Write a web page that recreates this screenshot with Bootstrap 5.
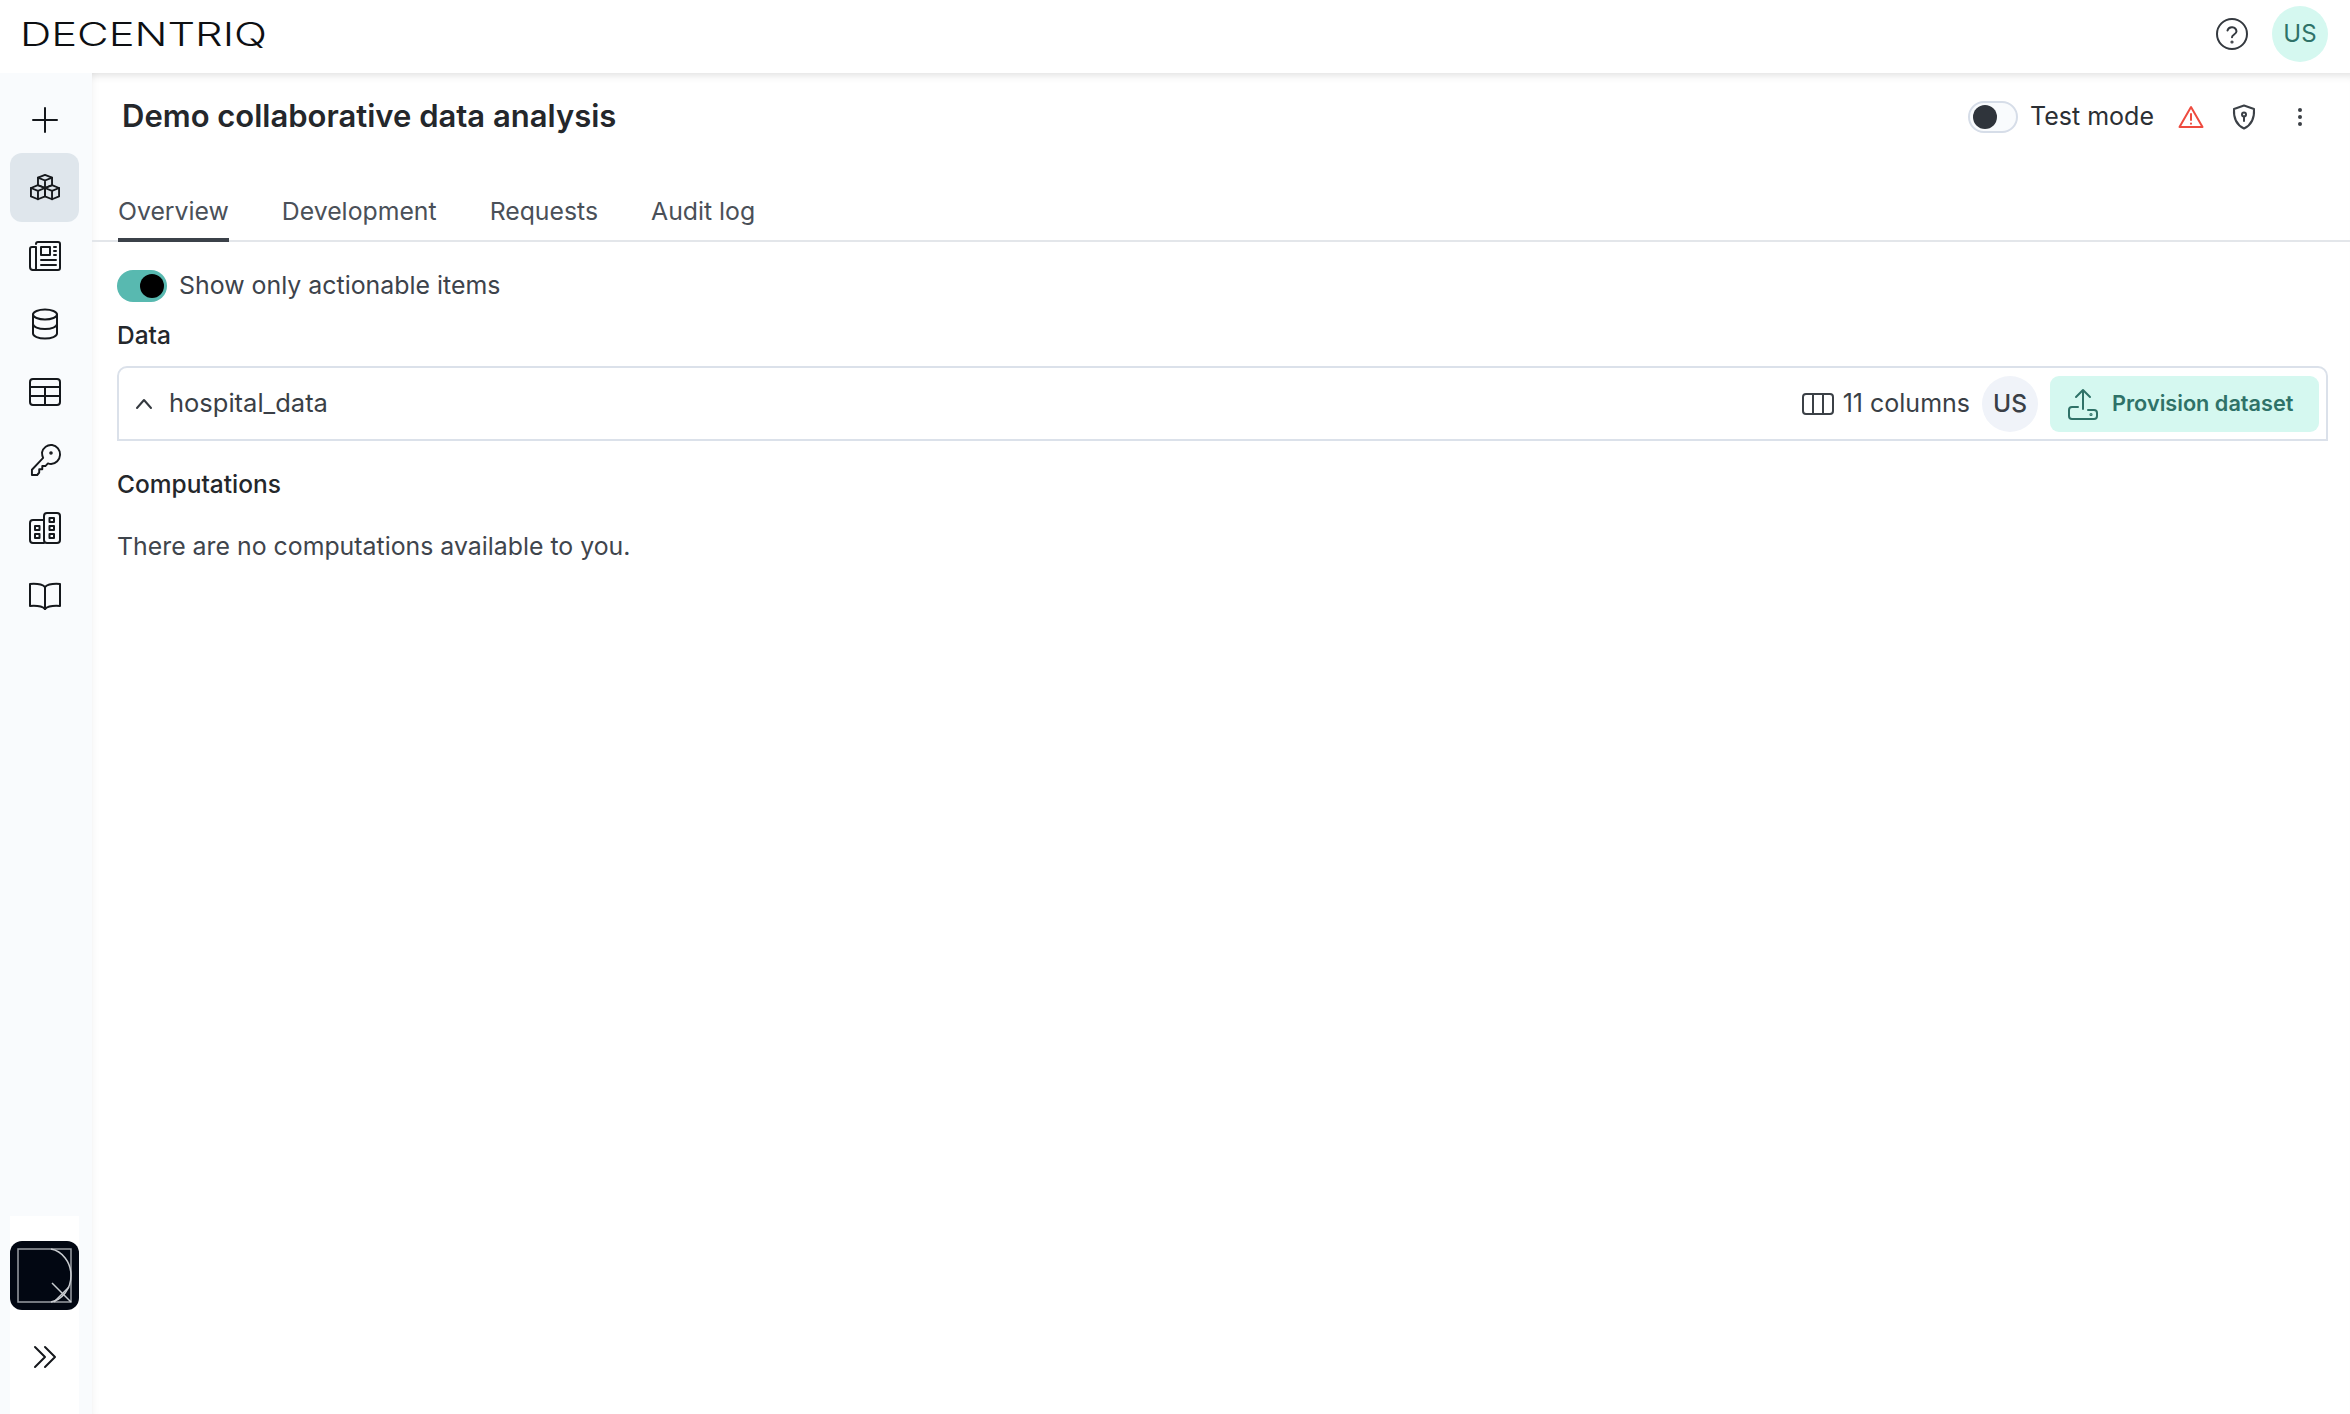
<!DOCTYPE html>
<html lang="en">
<head>
<meta charset="utf-8">
<title>Decentriq</title>
<link href="https://cdn.jsdelivr.net/npm/bootstrap@5.3.0/dist/css/bootstrap.min.css" rel="stylesheet">
<style>
html,body{height:100%;}
body{font-family:Inter,"Liberation Sans",sans-serif;font-size:24px;color:#3d434b;background:#fff;overflow:hidden;}
svg{display:block;flex:none;}
.ico{fill:none;stroke:#15181c;stroke-width:2;stroke-linecap:round;stroke-linejoin:round;}
.topbar{height:73px;padding:0 22px 5px 19px;background:#fff;position:relative;z-index:3;}
.brand-text{font-family:Inter,sans-serif;font-weight:300;font-size:32px;fill:#0d0f12;}
.avatar-top{width:56px;height:56px;border-radius:50%;background:#d5f8f0;color:#2f7268;font-size:24px;}
.shell{height:calc(100% - 73px);}
.rail{width:92px;background:#f9fbfd;padding-top:12px;position:relative;z-index:2;}
.rail-btn{width:69px;height:69px;margin:0 0 -1px 10px;border-radius:12px;}
.rail-btn.current{background:#dfe6ec;}
.rail-foot{width:69px;margin-left:10px;background:#fff;padding-top:25px;}
.logo-tile{width:69px;height:69px;border-radius:12px;background:#020712;}
.fold-btn{height:104px;width:69px;padding-bottom:10px;}
.stage{min-width:0;box-shadow:inset 0 9px 9px -7px rgba(0,0,0,.13),inset 9px 0 9px -8px rgba(0,0,0,.05);}
.title-row{height:87px;padding:0 34px 0 30px;}
.page-title{font-size:31px;font-weight:600;color:#24272b;margin:0 0 2px;line-height:1.2;}
.tabs-row{height:82px;border-bottom:2px solid #e3e6ea;padding-left:26px;gap:53px;}
.tab-link{color:#4a5058;font-size:24.8px;height:82px;padding-top:33px;text-decoration:none;line-height:36px;}
.tab-link.current{border-bottom:4px solid #3b4149;margin-bottom:-2px;height:82px;}
.switch-track{width:50px;height:32px;border-radius:16px;padding:0 3px;}
.switch-track i{display:block;width:24px;height:24px;border-radius:50%;}
.switch-on{background:#58b9b0;justify-content:flex-end;}
.switch-on i{background:#000;}
.switch-off{background:#f9fbfd;border:2px solid #d6dde8;}
.switch-off i{background:#2f343b;}
.test-label{color:#2b2f34;font-size:25px;margin-left:12px;}
.body-pad{padding:0 22px 0 25px;}
.filter-row{gap:12px;font-size:24.9px;padding-top:9px;height:79px;}
.sect-label{color:#24272b;font-size:24.5px;font-weight:500;line-height:30px;}
.data-box{height:75px;border:2px solid #dbe1ea;border-radius:10px 10px 0 0;padding:0 7px 0 15px;margin-top:16px;}
.data-name{font-size:25.5px;color:#3a3f46;margin-left:15px;}
.col-count{font-size:25px;color:#3a3f46;}
.avatar-small{width:56px;height:56px;border-radius:50%;background:#f0f3f9;color:#3a3f46;font-size:24.5px;font-weight:500;margin:0 12px;}
.provision{height:56px;width:269px;background:#d5f8f0;color:#2f7268;border:0;border-radius:9px;font-size:21.7px;font-weight:600;gap:14px;padding:0 0 0 18px;}
.provision:hover{background:#d5f8f0;color:#2f7268;}
.none-text{font-size:24.85px;color:#3f454c;margin-top:29px;}
</style>
</head>
<body>
<header class="topbar d-flex align-items-center justify-content-between">
  <svg width="254" height="40" viewBox="0 0 254 40"><text class="brand-text" x="1" y="31.500" textLength="247" lengthAdjust="spacingAndGlyphs">DECENTRIQ</text></svg>
  <div class="d-flex align-items-center gap-4">
    <svg width="34" height="34" viewBox="0 0 34 34" class="ico" style="stroke:#34393f;margin-right:-1px"><circle cx="17" cy="17" r="15"/><path d="M12.500 13.500a4.600 4.600 0 0 1 9 .8c0 3-4.500 3.400-4.500 6"/><circle cx="17" cy="25" r=".6"/></svg>
    <div class="avatar-top d-flex align-items-center justify-content-center">US</div>
  </div>
</header>
<div class="shell d-flex">
  <nav class="rail d-flex flex-column flex-shrink-0">
    <a class="rail-btn d-flex align-items-center justify-content-center"><svg width="32" height="32" viewBox="0 0 32 32" class="ico"><path d="M16 4v24M4 16h24"/></svg></a>
    <a class="rail-btn current d-flex align-items-center justify-content-center"><svg width="32" height="30" viewBox="0 0 34 32" class="ico"><path d="M17 2l7.500 3v8l-7.500 3-7.500-3V5z"/><path d="M9.500 5l7.500 3 7.500-3M17 8v8"/><path d="M9.500 13L17 16v9l-7.500 3L2 25v-9z"/><path d="M2 16l7.500 3 7.500-3M9.500 19v9"/><path d="M24.500 13l7.500 3v9l-7.500 3-7.500-3v-9z"/><path d="M17 16l7.500 3 7.500-3M24.500 19v9"/></svg></a>
    <a class="rail-btn d-flex align-items-center justify-content-center"><svg width="34" height="30" viewBox="0 0 34 30" class="ico"><path d="M8 3a2 2 0 0 1 2-2h20a2 2 0 0 1 2 2v24a2 2 0 0 1-2 2H5"/><path d="M5 29a3 3 0 0 1-3-3V8a2 2 0 0 1 2-2h4v21a2 2 0 0 1-3 2z"/><rect x="13" y="6" width="9" height="8"/><path d="M26 6h2M26 10h2M26 14h2M13 19h15M13 24h15"/></svg></a>
    <a class="rail-btn d-flex align-items-center justify-content-center"><svg width="28" height="32" viewBox="0 0 28 32" class="ico"><ellipse cx="14" cy="6.500" rx="12" ry="5"/><path d="M2 6.500v19c0 2.800 5.400 5 12 5s12-2.200 12-5v-19"/><path d="M2 16c0 2.800 5.400 5 12 5s12-2.200 12-5"/></svg></a>
    <a class="rail-btn d-flex align-items-center justify-content-center"><svg width="32" height="28" viewBox="0 0 32 28" class="ico"><rect x="1" y="1" width="30" height="26" rx="3"/><path d="M1 9h30M1 18h30M16 9v18"/></svg></a>
    <a class="rail-btn d-flex align-items-center justify-content-center"><svg width="32" height="34" viewBox="0 0 32 34" class="ico"><path d="M12.500 9.500A9.500 9.500 0 1 1 22 21c-1.300 0-2.300-.2-3.300-.6L16 23.100h-3.200v3.200H9.600v3.200L7.500 32H2v-5.200l11.700-11.900c-.8-1.600-1.200-3.400-1.200-5.400z" transform="translate(1 0) scale(.96 1)"/><circle cx="22" cy="10" r=".8"/></svg></a>
    <a class="rail-btn d-flex align-items-center justify-content-center"><svg width="32" height="32" viewBox="0 0 32 32" class="ico"><rect x="15" y="1" width="16" height="30" rx="3"/><path d="M15 31H4a3 3 0 0 1-3-3V11a3 3 0 0 1 3-3h11"/><rect x="20.500" y="6" width="4.500" height="4"/><rect x="20.500" y="14" width="4.500" height="4"/><rect x="20.500" y="22" width="4.500" height="4"/><rect x="6" y="14" width="4.500" height="4"/><rect x="6" y="22" width="4.500" height="4"/></svg></a>
    <a class="rail-btn d-flex align-items-center justify-content-center"><svg width="32" height="28" viewBox="0 0 32 28" class="ico"><path d="M16 5c-3-3-8-3.500-15-3v22c7-.5 12 0 15 3 3-3 8-3.500 15-3V2c-7-.5-12 0-15 3z"/><path d="M16 5v22"/></svg></a>
    <div class="rail-foot mt-auto d-flex flex-column">
      <div class="logo-tile d-flex align-items-center justify-content-center"><svg width="55" height="55" viewBox="0 0 55 55" fill="none" stroke="#9a9ea4" stroke-width="1.500"><rect x="1" y="1" width="53" height="53"/><path d="M34 1c11 2 20 13 20 26.500S45 52 34 54" stroke="#c9ccd0"/><path d="M35 35l19 19M37 54l15-15" stroke="#c9ccd0"/></svg></div>
      <div class="fold-btn d-flex align-items-center justify-content-center"><svg width="24" height="24" viewBox="0 0 24 24" class="ico"><path d="M2 2l10 10L2 22M12 2l10 10-10 10"/></svg></div>
    </div>
  </nav>
  <main class="stage flex-grow-1">
    <div class="title-row d-flex align-items-center justify-content-between">
      <h1 class="page-title">Demo collaborative data analysis</h1>
      <div class="d-flex align-items-center">
        <span class="switch-track switch-off d-flex align-items-center"><i></i></span>
        <span class="test-label">Test mode</span>
        <svg width="26" height="24" viewBox="0 0 26 24" class="ico" style="stroke:#ee4b3f;margin-left:24px"><path d="M13 2L1.500 22h23z"/><path d="M13 9v6M13 18.500v.3"/></svg>
        <svg width="24" height="26" viewBox="0 0 24 26" class="ico" style="stroke:#3b4046;margin-left:28px"><path d="M12 1.500l10 3.500c.5 8-1.500 15.500-10 19.500C3.500 20.500 1.500 13 2 5z"/><circle cx="12" cy="10.500" r="2"/><path d="M12 12.500v4.500"/></svg>
        <svg width="6" height="20" viewBox="0 0 6 20" style="margin-left:41px;margin-right:13px" fill="#3b4046"><circle cx="3" cy="3" r="2"/><circle cx="3" cy="10" r="2"/><circle cx="3" cy="17" r="2"/></svg>
      </div>
    </div>
    <div class="tabs-row d-flex">
      <a class="tab-link current">Overview</a>
      <a class="tab-link">Development</a>
      <a class="tab-link">Requests</a>
      <a class="tab-link">Audit log</a>
    </div>
    <div class="body-pad">
      <div class="filter-row d-flex align-items-center">
        <span class="switch-track switch-on d-flex align-items-center"><i></i></span>
        <span>Show only actionable items</span>
      </div>
      <div class="sect-label" style="margin-top:-1px">Data</div>
      <div class="data-box d-flex align-items-center">
        <svg width="20" height="12" viewBox="0 0 20 12" class="ico" style="stroke:#34393f"><path d="M3 10l7-8 7 8"/></svg>
        <span class="data-name">hospital_data</span>
        <div class="ms-auto d-flex align-items-center">
          <svg width="32" height="22" viewBox="0 0 32 22" class="ico" style="stroke:#3b4046;margin-right:9px"><rect x="1" y="1" width="30" height="20" rx="3"/><path d="M11 1v20M21 1v20"/></svg>
          <span class="col-count">11 columns</span>
          <span class="avatar-small d-flex align-items-center justify-content-center">US</span>
          <button class="provision btn d-flex align-items-center" type="button">
            <svg width="30" height="32" viewBox="0 0 30 32" class="ico" style="stroke:#2f7268"><path d="M15 21V2M8 9l7-7 7 7"/><path d="M10 19H4a3 3 0 0 0-3 3v6a3 3 0 0 0 3 3h22a3 3 0 0 0 3-3v-3a3 3 0 0 0-3-3h-6"/><circle cx="23" cy="26.500" r=".6"/></svg>
            <span>Provision dataset</span>
          </button>
        </div>
      </div>
      <div class="sect-label" style="margin-top:28px">Computations</div>
      <div class="none-text">There are no computations available to you.</div>
    </div>
  </main>
</div>
<script src="https://cdn.jsdelivr.net/npm/bootstrap@5.3.0/dist/js/bootstrap.bundle.min.js"></script>
</body>
</html>
